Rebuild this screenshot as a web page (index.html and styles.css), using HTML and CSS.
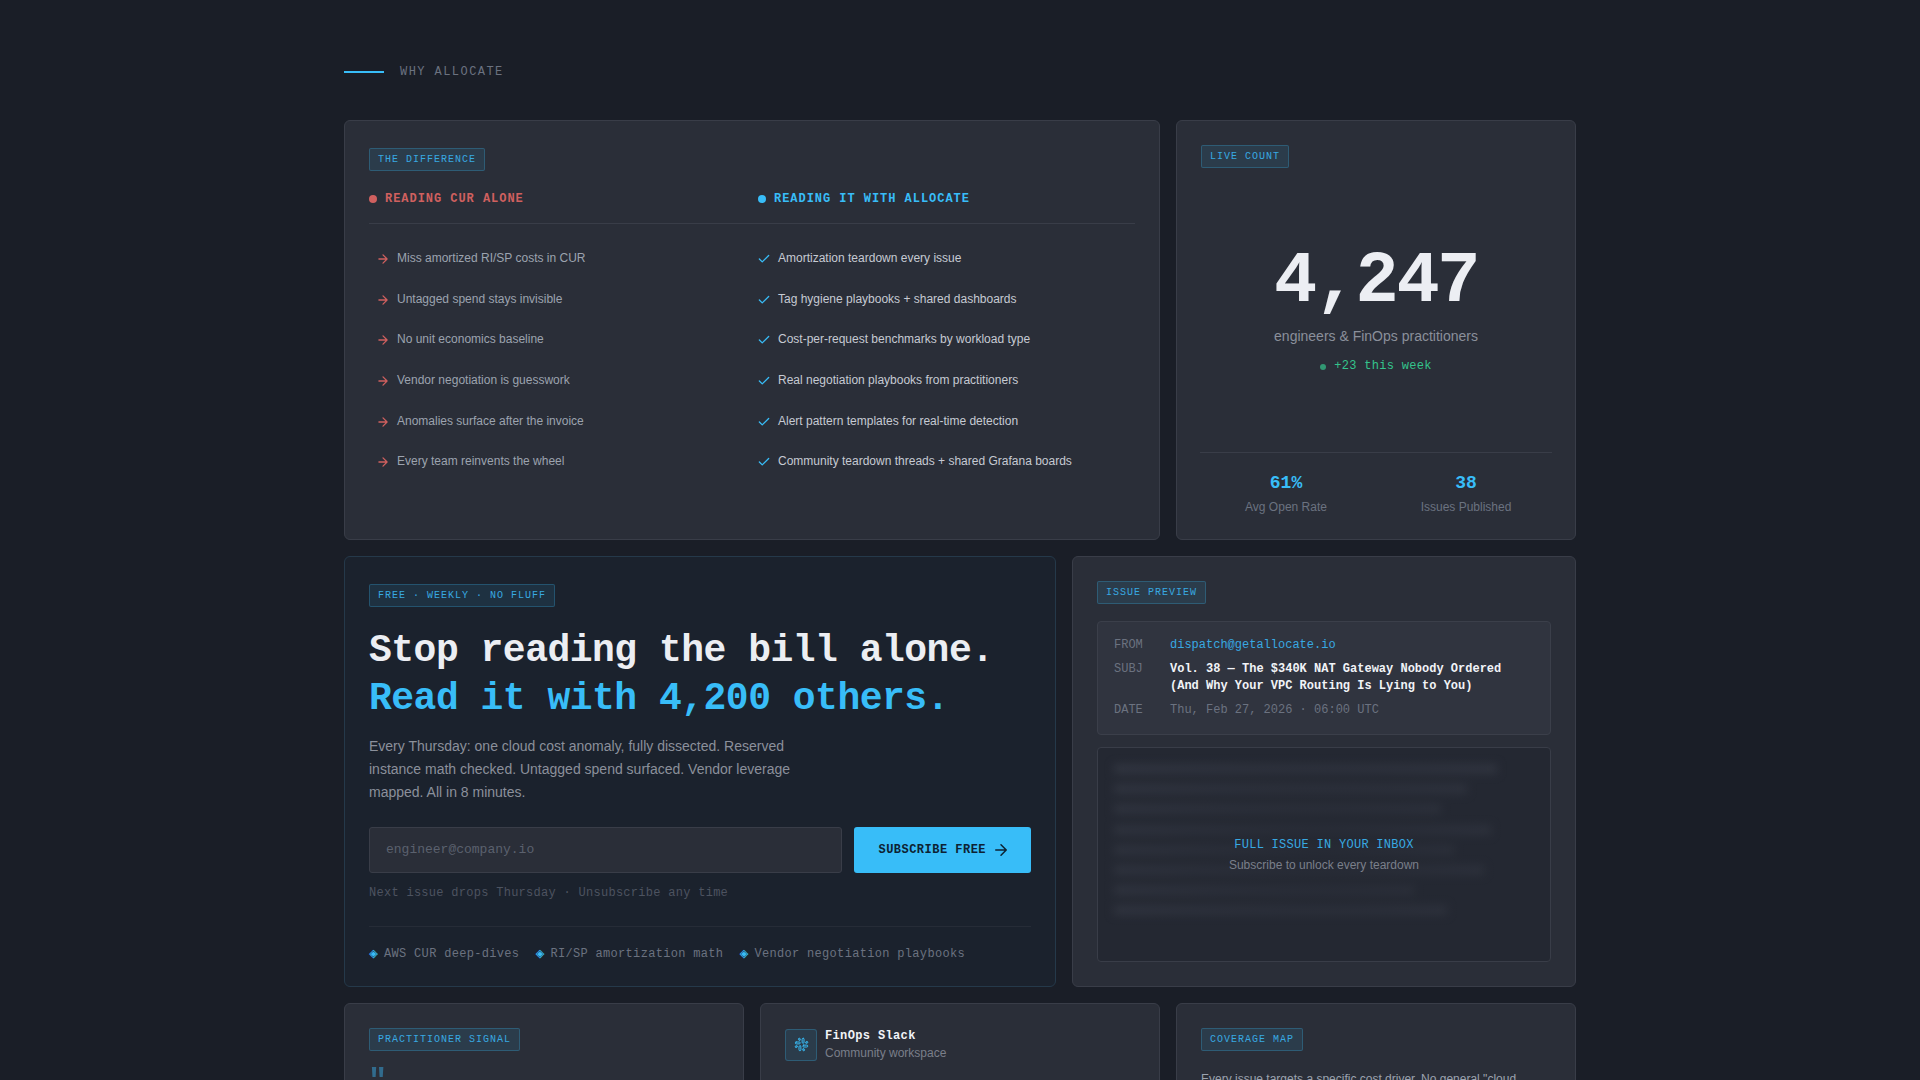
FILE: index.html
```html
<!DOCTYPE html>
<html>
<head>
    <meta charset="UTF-8">
    <title>Why Allocate</title>
    <link rel="stylesheet" href="styles.css">
</head>
<body>
    <main class="page">
        <div class="eyebrow"><span class="eyebrow-line"></span>WHY ALLOCATE</div>

        <div class="bento">
            <!-- comparison -->
            <section class="card span-8">
                <span class="tag tag-low">THE DIFFERENCE</span>
                <div class="compare-head">
                    <div class="compare-title red"><span class="dot"></span>READING CUR ALONE</div>
                    <div class="compare-title blue"><span class="dot"></span>READING IT WITH ALLOCATE</div>
                </div>
                <div class="compare-body">
                    <ul class="list list-bad">
                        <li><svg class="ico" viewBox="0 0 24 24"><path d="M5 12h14M12 5l7 7-7 7"/></svg>Miss amortized RI/SP costs in CUR</li>
                        <li><svg class="ico" viewBox="0 0 24 24"><path d="M5 12h14M12 5l7 7-7 7"/></svg>Untagged spend stays invisible</li>
                        <li><svg class="ico" viewBox="0 0 24 24"><path d="M5 12h14M12 5l7 7-7 7"/></svg>No unit economics baseline</li>
                        <li><svg class="ico" viewBox="0 0 24 24"><path d="M5 12h14M12 5l7 7-7 7"/></svg>Vendor negotiation is guesswork</li>
                        <li><svg class="ico" viewBox="0 0 24 24"><path d="M5 12h14M12 5l7 7-7 7"/></svg>Anomalies surface after the invoice</li>
                        <li><svg class="ico" viewBox="0 0 24 24"><path d="M5 12h14M12 5l7 7-7 7"/></svg>Every team reinvents the wheel</li>
                    </ul>
                    <ul class="list list-good">
                        <li><svg class="ico" viewBox="0 0 24 24"><path d="M20 6L9 17l-5-5"/></svg>Amortization teardown every issue</li>
                        <li><svg class="ico" viewBox="0 0 24 24"><path d="M20 6L9 17l-5-5"/></svg>Tag hygiene playbooks + shared dashboards</li>
                        <li><svg class="ico" viewBox="0 0 24 24"><path d="M20 6L9 17l-5-5"/></svg>Cost-per-request benchmarks by workload type</li>
                        <li><svg class="ico" viewBox="0 0 24 24"><path d="M20 6L9 17l-5-5"/></svg>Real negotiation playbooks from practitioners</li>
                        <li><svg class="ico" viewBox="0 0 24 24"><path d="M20 6L9 17l-5-5"/></svg>Alert pattern templates for real-time detection</li>
                        <li><svg class="ico" viewBox="0 0 24 24"><path d="M20 6L9 17l-5-5"/></svg>Community teardown threads + shared Grafana boards</li>
                    </ul>
                </div>
            </section>

            <!-- live count -->
            <section class="card span-4 live">
                <span class="tag">LIVE COUNT</span>
                <div class="live-main">
                    <div class="live-number">4,247</div>
                    <div class="live-label">engineers &amp; FinOps practitioners</div>
                    <div class="live-delta"><span class="dot"></span>+23 this week</div>
                </div>
                <div class="live-stats">
                    <div class="stat"><div class="stat-value">61%</div><div class="stat-label">Avg Open Rate</div></div>
                    <div class="stat"><div class="stat-value">38</div><div class="stat-label">Issues Published</div></div>
                </div>
            </section>

            <!-- subscribe -->
            <section class="card span-7 hero">
                <span class="tag tag-low">FREE · WEEKLY · NO FLUFF</span>
                <h1>Stop reading the bill alone.<br><span class="blue">Read it with 4,200 others.</span></h1>
                <p class="hero-text">Every Thursday: one cloud cost anomaly, fully dissected. Reserved instance math checked. Untagged spend surfaced. Vendor leverage mapped. All in 8 minutes.</p>
                <form class="signup">
                    <input type="email" placeholder="engineer@company.io">
                    <button type="button">SUBSCRIBE FREE<svg viewBox="0 0 24 24"><path d="M5 12h14M12 5l7 7-7 7"/></svg></button>
                </form>
                <div class="signup-note">Next issue drops Thursday · Unsubscribe any time</div>
                <div class="features">
                    <span><i>◈</i>AWS CUR deep-dives</span>
                    <span><i>◈</i>RI/SP amortization math</span>
                    <span><i>◈</i>Vendor negotiation playbooks</span>
                </div>
            </section>

            <!-- issue preview -->
            <section class="card span-5">
                <span class="tag">ISSUE PREVIEW</span>
                <div class="mail-head">
                    <div class="mail-row"><span class="mail-key">FROM</span><span class="mail-from">dispatch@getallocate.io</span></div>
                    <div class="mail-row"><span class="mail-key">SUBJ</span><span class="mail-subj">Vol. 38 — The $340K NAT Gateway Nobody Ordered<br>(And Why Your VPC Routing Is Lying to You)</span></div>
                    <div class="mail-row"><span class="mail-key">DATE</span><span class="mail-date">Thu, Feb 27, 2026 · 06:00 UTC</span></div>
                </div>
                <div class="mail-body">
                    <div class="blur-lines">
                        <div></div><div></div><div></div><div></div><div></div><div></div><div></div><div></div>
                    </div>
                    <div class="mail-lock">
                        <div class="lock-title">FULL ISSUE IN YOUR INBOX</div>
                        <div class="lock-sub">Subscribe to unlock every teardown</div>
                    </div>
                </div>
            </section>

            <!-- bottom row -->
            <section class="card span-4">
                <span class="tag">PRACTITIONER SIGNAL</span>
                <div class="quote-mark">"</div>
                <p class="quote">We found $84K in untagged spend the first week we followed the playbook.</p>
            </section>

            <section class="card span-4">
                <div class="slack-head">
                    <div class="slack-icon">
                        <svg viewBox="0 0 24 24">
                            <rect x="13" y="2" width="3" height="8" rx="1.5"/>
                            <path d="M19 8.5V10h1.5A1.5 1.5 0 1 0 19 8.5"/>
                            <rect x="8" y="14" width="3" height="8" rx="1.5"/>
                            <path d="M5 15.5V14H3.5A1.5 1.5 0 1 0 5 15.5"/>
                            <rect x="14" y="13" width="8" height="3" rx="1.5"/>
                            <path d="M15.5 19H14v1.5a1.5 1.5 0 1 0 1.5-1.5"/>
                            <rect x="2" y="8" width="8" height="3" rx="1.5"/>
                            <path d="M8.5 5H10V3.5A1.5 1.5 0 1 0 8.5 5"/>
                        </svg>
                    </div>
                    <div>
                        <div class="slack-name">FinOps Slack</div>
                        <div class="slack-sub">Community workspace</div>
                    </div>
                </div>
            </section>

            <section class="card span-4">
                <span class="tag">COVERAGE MAP</span>
                <p class="coverage">Every issue targets a specific cost driver. No general "cloud cost" advice, only named line items.</p>
            </section>
        </div>
    </main>
</body>
</html>
```
FILE: styles.css
```css
* { box-sizing: border-box; }
body { margin: 0; background-color: #1a1e27; color: #9ca3af; font-family: "Liberation Sans", Arial, sans-serif; }
.page { width: 1232px; margin: 0 auto; padding-top: 65px; }
.blue { color: #38bdf8; }
.red { color: #d0605f; }

.eyebrow { display: flex; align-items: center; gap: 16px; height: 14px; margin-bottom: 41px; font: 12px/14px "Liberation Mono", monospace; letter-spacing: 0.12em; color: #6b7280; }
.eyebrow-line { width: 40px; height: 2px; background-color: #38bdf8; }

.bento { display: grid; grid-template-columns: repeat(12, 1fr); gap: 16px; }
.card { background-color: #2a2e38; border: 1px solid #393d48; border-radius: 6px; padding: 24px; }
.span-8 { grid-column: span 8; height: 420px; }
.span-4 { grid-column: span 4; }
.span-7 { grid-column: span 7; }
.span-5 { grid-column: span 5; }

.tag { display: inline-block; height: 23px; padding: 0 8px; font: 10px/21px "Liberation Mono", monospace; letter-spacing: 0.1em; color: #38a9e2; background-color: rgba(56, 189, 248, 0.1); border: 1px solid rgba(56, 189, 248, 0.25); border-radius: 2px; vertical-align: top; }
.tag-low { margin-top: 3px; }

/* comparison */
.compare-head { display: grid; grid-template-columns: 1fr 1fr; column-gap: 12px; margin-top: 19px; padding-bottom: 15px; border-bottom: 1px solid #393d48; }
.compare-title { display: flex; align-items: center; gap: 8px; font: bold 12px/18px "Liberation Mono", monospace; letter-spacing: 0.08em; }
.dot { display: block; width: 8px; height: 8px; border-radius: 50%; background-color: currentColor; }
.compare-body { display: grid; grid-template-columns: 1fr 1fr; column-gap: 12px; margin-top: 14px; }
.list { margin: 0; padding: 0; list-style: none; font-size: 12px; }
.list li { display: flex; align-items: center; gap: 7px; height: 40.6px; }
.list-bad { padding-left: 7px; color: #9ca3af; }
.list-good { margin-left: -1px; color: #c6cad3; }
.ico { width: 14px; height: 14px; flex: none; margin-top: 2px; fill: none; stroke-width: 2.2; stroke-linecap: round; stroke-linejoin: round; }
.list-bad .ico { stroke: #d0605f; }
.list-good .ico { stroke: #38bdf8; }

/* live count */
.live { display: flex; flex-direction: column; align-items: flex-start; }
.live-main { align-self: stretch; flex: 1; display: flex; flex-direction: column; align-items: center; padding-top: 78px; text-align: center; }
.live-number { font: bold 72px/72px "Liberation Mono", monospace; letter-spacing: -2.4px; color: #eceef3; }
.live-label { margin-top: 8px; font-size: 14px; line-height: 20px; color: #8b909b; }
.live-delta { display: flex; align-items: center; gap: 8px; margin-top: 11px; font: 12px/18px "Liberation Mono", monospace; letter-spacing: 0.3px; color: #34c48c; }
.live-delta .dot { width: 6px; height: 6px; margin-top: 2px; opacity: 0.7; }
.live-stats { align-self: stretch; display: grid; grid-template-columns: 1fr 1fr; column-gap: 8px; margin: 0 -1px -1px; padding-top: 20px; border-top: 1px solid #393d48; text-align: center; }
.stat-value { font: bold 18px/20px "Liberation Mono", monospace; color: #38bdf8; }
.stat-label { margin-top: 5px; font-size: 12px; line-height: 18px; color: #6b7280; }

/* subscribe */
.hero { background-color: #1b222d; border-color: #25394a; height: 431px; }
h1 { margin: 20px 0 0; font: bold 38px/48px "Liberation Mono", monospace; letter-spacing: -0.5px; color: #eceef3; }
.hero-text { width: 440px; margin: 12px 0 0; font-size: 14px; line-height: 23px; color: #8b909b; }
.signup { display: flex; gap: 12px; margin-top: 23px; }
.signup input { flex: 1; min-width: 0; height: 46px; padding: 0 16px 2px; font: 13px "Liberation Mono", monospace; color: #c6cad3; background-color: #2a2e38; border: 1px solid #393d48; border-radius: 3px; outline: none; }
.signup input::placeholder { color: #5b616e; }
.signup button { display: flex; align-items: center; gap: 6px; height: 46px; padding: 0 21px 0 24px; font: bold 12px "Liberation Mono", monospace; letter-spacing: 0.04em; color: #0d2233; background-color: #38bdf8; border: none; border-radius: 3px; }
.signup svg { width: 18px; height: 18px; fill: none; stroke: #0d2233; stroke-width: 2; stroke-linecap: round; stroke-linejoin: round; }
.signup-note { margin-top: 12px; font: 12px/16px "Liberation Mono", monospace; letter-spacing: 0.28px; color: #4d5360; }
.features { display: flex; gap: 16px; margin-top: 25px; padding-top: 19px; border-top: 1px solid #262c37; font: 12px/16px "Liberation Mono", monospace; letter-spacing: 0.32px; color: #6b7280; }
.features i { display: inline-block; width: 15px; font-size: 15px; line-height: 16px; font-style: normal; letter-spacing: 0; color: #38bdf8; vertical-align: -1px; }

/* issue preview */
.mail-head { display: flex; flex-direction: column; gap: 7px; margin-top: 17px; padding: 15px 16px; background-color: #30343f; border: 1px solid #3b3f4a; border-radius: 4px; font: 12px/17px "Liberation Mono", monospace; }
.mail-row { display: flex; }
.mail-key { width: 56px; flex: none; color: #6b7280; }
.mail-from { color: #38a9e2; }
.mail-subj { font-weight: bold; color: #f1f3f7; }
.mail-date { color: #6b7280; }
.mail-body { position: relative; height: 215px; margin-top: 12px; padding: 16px; overflow: hidden; background-color: #242832; border: 1px solid #393d48; border-radius: 4px; }
.blur-lines { display: flex; flex-direction: column; gap: 10.2px; filter: blur(4px); }
.blur-lines div { height: 10px; background-color: #343843; }
.blur-lines div:nth-child(1) { width: 383px; }
.blur-lines div:nth-child(2) { width: 353px; }
.blur-lines div:nth-child(3) { width: 327px; }
.blur-lines div:nth-child(4) { width: 377px; }
.blur-lines div:nth-child(5) { width: 340px; }
.blur-lines div:nth-child(6) { width: 370px; }
.blur-lines div:nth-child(7) { width: 300px; }
.blur-lines div:nth-child(8) { width: 333px; }
.mail-lock { position: absolute; inset: 0; display: flex; flex-direction: column; align-items: center; justify-content: center; gap: 3px; padding-top: 1px; background: radial-gradient(ellipse at center, rgba(36, 40, 50, 0.85), rgba(36, 40, 50, 0.1)); }
.lock-title { font: 12px/16px "Liberation Mono", monospace; letter-spacing: 0.28px; color: #38a9e2; }
.lock-sub { font-size: 12px; line-height: 18px; color: #7a7f8a; }

/* bottom row */
.quote-mark { margin: 15px 0 0 -1px; font: bold 32px/32px "Liberation Mono", monospace; color: #38a9e2; opacity: 0.5; }
.quote { margin: 0; font-size: 13px; line-height: 20px; color: #c6cad3; }
.slack-head { display: flex; align-items: center; gap: 8px; }
.slack-icon { display: flex; align-items: center; justify-content: center; width: 32px; height: 32px; background-color: rgba(56, 189, 248, 0.1); border: 1px solid rgba(56, 189, 248, 0.25); border-radius: 3px; }
.slack-icon svg { width: 15px; height: 15px; fill: none; stroke: #38bdf8; stroke-width: 1.6; stroke-linecap: round; stroke-linejoin: round; }
.slack-name { font: bold 12px/16px "Liberation Mono", monospace; letter-spacing: 0.03em; color: #f1f3f7; }
.slack-sub { margin-top: 1px; font-size: 12px; line-height: 16px; color: #7a7f8a; }
.coverage { max-width: 330px; margin: 19px 0 0; font-size: 12px; line-height: 19px; color: #9ca3af; }
```
